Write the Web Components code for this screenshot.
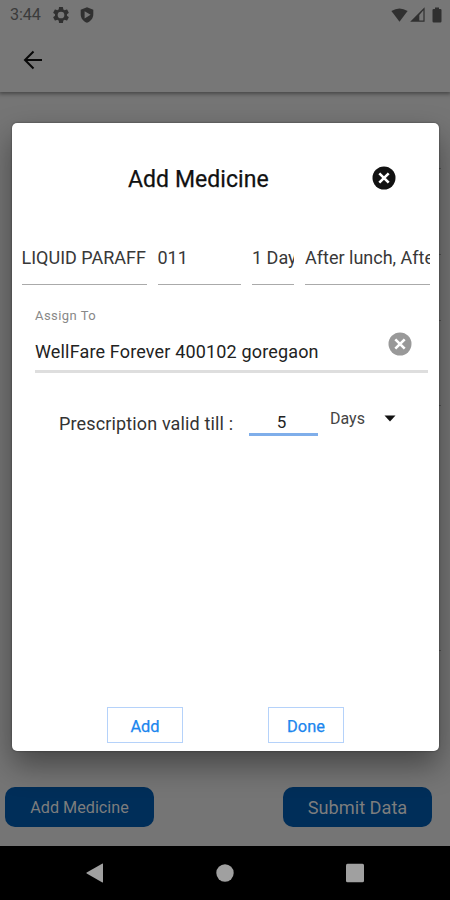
<!DOCTYPE html>
<html lang="en">
<head>
<meta charset="utf-8">
<title>Add Medicine</title>
<style>
  html, body { margin: 0; height: 100%; overflow: hidden; }
  body { font-family: Roboto, "Liberation Sans", sans-serif; background: #757575; }
</style>
</head>
<body>
<medicine-app></medicine-app>

<script>
"use strict";

class BaseElement extends HTMLElement {
  constructor() {
    super();
    this.attachShadow({ mode: 'open' });
    const template = document.createElement('template');
    template.innerHTML = `<style>* { box-sizing: border-box; }${this._style()}</style>${this._markup()}`;
    this.shadowRoot.appendChild(template.content.cloneNode(true));
  }
}

// Clock and notifications on the left, connection and battery on the right
class StatusBar extends BaseElement {
  _style() {
    return `
      :host { display: flex; justify-content: space-between; height: 30px; padding: 0 8px 0 10px; color: #3b3b3b; }
      div { display: flex; align-items: center; height: 29px; }
      span { width: 43px; font-size: 16.2px; letter-spacing: -.1px; }
      svg { display: block; fill: #303030; }
      .shield { margin-left: 11px; }
    `;
  }

  _markup() {
    return `
      <div>
        <span>3:44</span>
        <svg width="16" height="16" viewBox="2 2 20 20"><path fill-rule="evenodd" d="M19.43 12.98c.04-.32.07-.64.07-.98s-.03-.66-.07-.98l2.11-1.65c.19-.15.24-.42.12-.64l-2-3.46c-.12-.22-.39-.3-.61-.22l-2.49 1c-.52-.4-1.08-.73-1.69-.98l-.38-2.65A.49.49 0 0 0 14 2h-4c-.25 0-.46.18-.49.42l-.38 2.65c-.61.25-1.17.59-1.69.98l-2.49-1c-.23-.09-.49 0-.61.22l-2 3.46c-.13.22-.07.49.12.64l2.11 1.65c-.04.32-.07.65-.07.98s.03.66.07.98l-2.11 1.65c-.19.15-.24.42-.12.64l2 3.46c.12.22.39.3.61.22l2.49-1c.52.4 1.08.73 1.69.98l.38 2.65c.03.24.24.42.49.42h4c.25 0 .46-.18.49-.42l.38-2.65c.61-.25 1.17-.59 1.69-.98l2.49 1c.23.09.49 0 .61-.22l2-3.46c.12-.22.07-.49-.12-.64zM12 7.8a4.2 4.2 0 1 1 0 8.4 4.2 4.2 0 0 1 0-8.4z"/></svg>
        <svg class="shield" width="14" height="16" viewBox="0 0 14 16"><path fill-rule="evenodd" d="M7 .3L.7 2.7v4.6c0 4 2.7 7.3 6.3 8.4 3.600-1.100 6.300-4.400 6.300-8.400V2.700zM4.600 4.200v7.200l6-3.600z"/></svg>
      </div>
      <div>
        <svg width="17" height="14" viewBox="0 0 17 14"><path d="M.4 3Q8.500-2 16.600 3L8.500 13.700z"/></svg>
        <svg width="15" height="15" viewBox="0 0 15 15" style="margin-left:2px"><path fill-rule="evenodd" d="M14.600.3v14.400H.2zM9.300 8v5.600h4.100V3.200z"/></svg>
        <svg width="10" height="16" viewBox="0 0 10 16" style="margin-left:7px"><path d="M3 .5h4v1.400h1.300q1.200 0 1.200 1.200v11.200q0 1.200-1.200 1.200H1.700q-1.200 0-1.200-1.200V3.100q0-1.200 1.200-1.200H3z"/></svg>
      </div>
    `;
  }
}

class TopBar extends BaseElement {
  _style() {
    return `
      :host { display: block; height: 92px; background: #777; box-shadow: 0 1px 4px 1px rgba(0, 0, 0, .4); }
      nav { padding: 20px 0 0 23px; }
      svg { display: block; }
    `;
  }

  _markup() {
    return `
      <status-bar></status-bar>
      <nav>
        <svg width="20" height="20" viewBox="0 0 20 20" fill="none" stroke="#080808" stroke-width="2"><path d="M19 10H2.500M10.500 1.500L2 10l8.500 8.500"/></svg>
      </nav>
    `;
  }
}

// Rows of the prescription behind the dialog, only their right ends show
class MedicineRows extends BaseElement {
  _style() {
    return `
      :host { display: flex; flex-direction: column; flex: 1; margin: 0 9px 0 20px; }
      div { border-bottom: 1px solid #555; }
    `;
  }

  _markup() {
    return [77, 86, 66, 85, 245].map( h => `<div style="height:${h}px"></div>`).join('');
  }
}

class ActionButton extends BaseElement {
  _style() {
    return `
      :host { display: flex; align-items: center; justify-content: center; width: 149px; height: 40px; border-radius: 10px; background: #002e59; color: #7d7d7d; }
    `;
  }

  _markup() {
    return `<slot></slot>`;
  }
}

class NavigationBar extends BaseElement {
  _style() {
    return `
      :host { display: flex; justify-content: space-between; align-items: center; height: 54px; padding: 0 85px 0 86px; background: #000; }
      svg { display: block; fill: #a0a0a0; }
    `;
  }

  _markup() {
    return `
      <svg width="18" height="20" viewBox="0 0 18 20"><path d="M16.500.5Q17 .3 17 1v18q0 .7-.6.400L.7 10.500q-.7-.5 0-1z"/></svg>
      <svg width="18" height="18" viewBox="0 0 18 18"><circle cx="9" cy="9" r="8.700"/></svg>
      <svg width="20" height="20" viewBox="0 0 20 20"><rect x="1" y=".8" width="18" height="18.400" rx="1.500"/></svg>
    `;
  }
}

class CloseIcon extends BaseElement {
  _style() {
    return `
      :host { display: block; flex: none; width: 24px; height: 24px; color: #111; }
      svg { display: block; }
    `;
  }

  _markup() {
    return `
      <svg width="24" height="24" viewBox="0 0 24 24"><circle cx="12" cy="12" r="11.500" fill="currentColor"/><path d="M7.300 7.300l9.400 9.400M16.700 7.300l-9.400 9.400" stroke="#fff" stroke-width="2.600"/></svg>
    `;
  }
}

// Single line, a value that is too long is clipped at the field's edge
class TextField extends BaseElement {
  _style() {
    return `
      :host { display: block; flex: none; height: 44px; border-bottom: 1.500px solid #aaa; overflow: hidden; white-space: nowrap; font-size: 18px; line-height: 34px; color: #383838; }
    `;
  }

  _markup() {
    return `<slot></slot>`;
  }
}

class OutlineButton extends BaseElement {
  _style() {
    return `
      :host { display: flex; align-items: center; justify-content: center; width: 76px; height: 36px; padding-top: 2px; border: 1px solid #b5d2fa; color: #1b86ee; font-size: 16.4px; -webkit-text-stroke: .25px; }
    `;
  }

  _markup() {
    return `<slot></slot>`;
  }
}

class MedicineDialog extends BaseElement {
  _style() {
    return `
      :host { display: flex; flex-direction: column; background: #fff; border-radius: 5px; box-shadow: 0 0 2px rgba(0, 0, 0, .5), 0 14px 30px rgba(0, 0, 0, .4); color: #222; }
      header { display: flex; align-items: center; height: 111px; padding: 0 43px 0 116px; }
      h1 { flex: 1; margin: 0; padding-top: 2px; font-size: 23px; font-weight: 400; letter-spacing: .06px; -webkit-text-stroke: .25px; color: #111; }
      header close-icon { margin-bottom: 1px; }
      .fields { display: flex; gap: 11px; height: 51px; padding: 7px 9px 0 9.5px; }
      .assign { margin: 21px 11px 0 23px; border-bottom: 3px solid #dedede; height: 67px; }
      label { display: block; font-size: 13px; line-height: 20px; letter-spacing: .45px; color: #888; }
      .value { display: flex; justify-content: space-between; padding: 5px 16px 0 0; font-size: 18px; line-height: 24px; letter-spacing: .16px; }
      .value span { padding-top: 9px; }
      .value close-icon { color: #999; margin-top: 1px; }
      .valid { display: flex; padding: 32px 0 0 47px; font-size: 18px; line-height: 24px; white-space: nowrap; }
      .valid .label { width: 190px; padding-top: 7px; letter-spacing: .14px; color: #333; }
      .valid .number { width: 69px; height: 31px; padding: 5px 4px 0 0; text-align: center; font-size: 17px; border-bottom: 3px solid #7faeea; }
      .valid .unit { width: 54px; margin-left: 12px; padding-top: 2px; font-size: 16px; color: #444; }
      .valid svg { display: block; margin-top: 10px; }
      footer { display: flex; gap: 85px; margin: auto 0 8px 95px; }
    `;
  }

  _markup() {
    return `
      <header><h1>Add Medicine</h1><close-icon></close-icon></header>
      <div class="fields">
        <text-field style="width:125px">LIQUID PARAFF</text-field>
        <text-field style="width:83.500px">011</text-field>
        <text-field style="width:42px">1 Day</text-field>
        <text-field style="width:125px">After lunch, Afte</text-field>
      </div>
      <div class="assign">
        <label>Assign To</label>
        <div class="value"><span>WellFare Forever 400102 goregaon</span><close-icon></close-icon></div>
      </div>
      <div class="valid">
        <div class="label">Prescription valid till :</div>
        <div class="number">5</div>
        <div class="unit">Days</div>
        <svg width="12" height="7" viewBox="0 0 12 7"><path d="M.5.500h11L6 6.500z" fill="#111"/></svg>
      </div>
      <footer>
        <outline-button>Add</outline-button>
        <outline-button>Done</outline-button>
      </footer>
    `;
  }
}

class MedicineApp extends BaseElement {
  _style() {
    return `
      :host { display: flex; flex-direction: column; position: relative; width: 450px; height: 900px; overflow: hidden; background: #757575; }
      .actions { display: flex; justify-content: space-between; height: 59px; padding: 0 18px 0 5px; }
      medicine-dialog { position: absolute; left: 12px; top: 123px; width: 427px; height: 628px; }
    `;
  }

  _markup() {
    return `
      <top-bar></top-bar>
      <medicine-rows></medicine-rows>
      <div class="actions">
        <action-button style="font-size:16.200px">Add Medicine</action-button>
        <action-button style="font-size:18.200px">Submit Data</action-button>
      </div>
      <navigation-bar></navigation-bar>
      <medicine-dialog></medicine-dialog>
    `;
  }
}

customElements.define('status-bar', StatusBar);
customElements.define('top-bar', TopBar);
customElements.define('medicine-rows', MedicineRows);
customElements.define('action-button', ActionButton);
customElements.define('navigation-bar', NavigationBar);
customElements.define('close-icon', CloseIcon);
customElements.define('text-field', TextField);
customElements.define('outline-button', OutlineButton);
customElements.define('medicine-dialog', MedicineDialog);
customElements.define('medicine-app', MedicineApp);
</script>
</body>
</html>
